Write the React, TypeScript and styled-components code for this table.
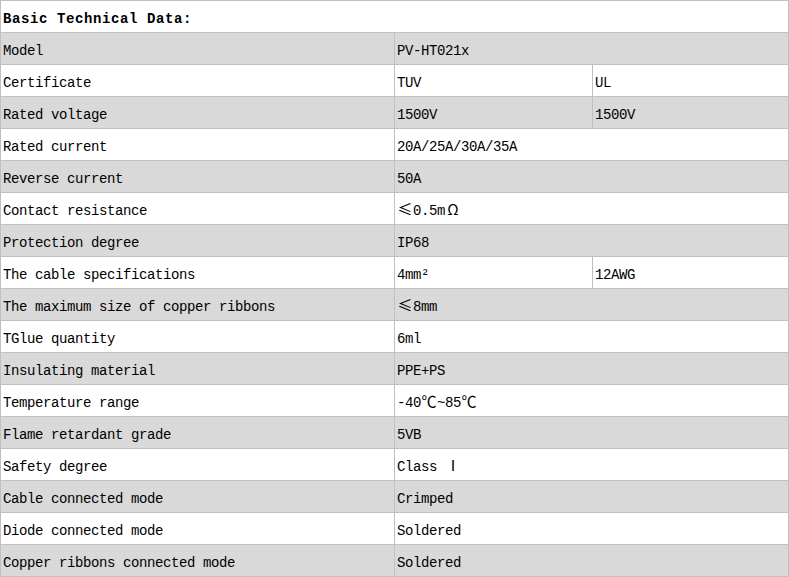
import React from "react";
import styled, { createGlobalStyle } from "styled-components";

const Global = createGlobalStyle`
  html, body { margin: 0; padding: 0; background: #ffffff; }
  * { box-sizing: border-box; }
`;

const Sheet = styled.div`
  width: 789px;
  display: grid;
  grid-template-columns: 394px 198px 196px;
  border-top: 1px solid #c0c0c0;
  border-left: 1px solid #c0c0c0;
  font-family: "Liberation Mono", "Noto Sans CJK SC", monospace;
  font-size: 14px;
  letter-spacing: -0.4px;
  color: #000;
`;

const Cell = styled.div<{ $shaded?: boolean; $span?: number; $bold?: boolean }>`
  grid-column: span ${(p) => p.$span ?? 1};
  height: 32px;
  padding: 10px 0 0 2px;
  line-height: 16px;
  white-space: nowrap;
  overflow: hidden;
  background: ${(p) => (p.$shaded ? "#d9d9d9" : "#ffffff")};
  border-right: 1px solid #c0c0c0;
  border-bottom: 1px solid #c0c0c0;
  font-weight: ${(p) => (p.$bold ? 700 : 400)};
  letter-spacing: ${(p) => (p.$bold ? "0.6px" : "-0.4px")};
`;

const Wide = styled.span`
  font-family: "Noto Sans CJK SC", sans-serif;
  font-size: 15px;
  letter-spacing: 0;
  display: inline-block;
  width: 16px;
  text-align: center;
  line-height: 0;
  vertical-align: baseline;
`;

type Row = { label: string; values: React.ReactNode[] };

const rows: Row[] = [
  { label: "Model", values: ["PV-HT021x"] },
  { label: "Certificate", values: ["TUV", "UL"] },
  { label: "Rated voltage", values: ["1500V", "1500V"] },
  { label: "Rated current", values: ["20A/25A/30A/35A"] },
  { label: "Reverse current", values: ["50A"] },
  {
    label: "Contact resistance",
    values: [
      <>
        <Wide>≤</Wide>0.5m<Wide>Ω</Wide>
      </>,
    ],
  },
  { label: "Protection degree", values: ["IP68"] },
  { label: "The cable specifications", values: ["4mm²", "12AWG"] },
  {
    label: "The maximum size of copper ribbons",
    values: [
      <>
        <Wide>≤</Wide>8mm
      </>,
    ],
  },
  { label: "TGlue quantity", values: ["6ml"] },
  { label: "Insulating material", values: ["PPE+PS"] },
  {
    label: "Temperature range",
    values: [
      <>
        -40<Wide>℃</Wide>~85<Wide>℃</Wide>
      </>,
    ],
  },
  { label: "Flame retardant grade", values: ["5VB"] },
  {
    label: "Safety degree",
    values: [
      <>
        Class <Wide>Ⅰ</Wide>
      </>,
    ],
  },
  { label: "Cable connected mode", values: ["Crimped"] },
  { label: "Diode connected mode", values: ["Soldered"] },
  { label: "Copper ribbons connected mode", values: ["Soldered"] },
];

export default function App() {
  return (
    <>
      <Global />
      <Sheet>
        <Cell $span={3} $bold>
          Basic Technical Data:
        </Cell>
        {rows.map((r, i) => {
          const shaded = i % 2 === 0;
          return (
            <React.Fragment key={r.label}>
              <Cell $shaded={shaded}>{r.label}</Cell>
              {r.values.length === 1 ? (
                <Cell $shaded={shaded} $span={2}>
                  {r.values[0]}
                </Cell>
              ) : (
                r.values.map((v, j) => (
                  <Cell $shaded={shaded} key={j}>
                    {v}
                  </Cell>
                ))
              )}
            </React.Fragment>
          );
        })}
      </Sheet>
    </>
  );
}
